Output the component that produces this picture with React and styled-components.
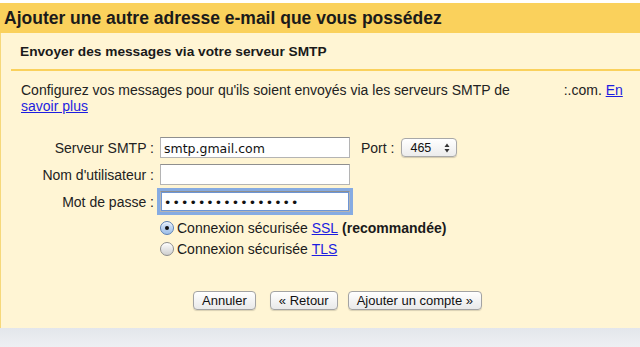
import React from 'react'
import styled, { createGlobalStyle } from 'styled-components'

const GlobalStyle = createGlobalStyle`
  html, body {
    margin: 0;
    padding: 0;
    background: #ffffff;
  }
  body {
    font-family: "Liberation Sans", Arial, sans-serif;
    color: #222;
  }
`;

const Page = styled.div`
  width: 640px;
  height: 347px;
  padding-top: 3px;
  box-sizing: border-box;
  display: flex;
  flex-direction: column;
  overflow: hidden;
`;

const Header = styled.h1`
  margin: 0;
  height: 30px;
  line-height: 31px;
  padding-left: 4px;
  background: #fad15c;
  font-size: 17.5px;
  font-weight: bold;
  color: #1a1a1a;
  white-space: nowrap;
`;

const Panel = styled.div`
  height: 295px;
  box-sizing: border-box;
  background: #fff5d4;
  border-left: 1px solid #f6d87a;
  display: flex;
  flex-direction: column;
`;

const SubHead = styled.h2`
  margin: 0 0 0 10px;
  height: 36px;
  padding-left: 9px;
  display: flex;
  align-items: center;
  border-bottom: 2px solid #fad15c;
  font-size: 13.7px;
  font-weight: bold;
  color: #1a1a1a;
`;

const Intro = styled.p`
  margin: 11px 10px 0 20px;
  font-size: 14px;
  line-height: 16px;
`;

const Hidden = styled.span`
  display: inline-block;
  width: 50px;
`;

const Link = styled.a`
  color: #1d1de0;
  text-decoration: underline;
  cursor: pointer;
`;

const Form = styled.div`
  margin-top: 23px;
  display: grid;
  grid-template-columns: 153px auto;
  column-gap: 6px;
  row-gap: 6px;
  align-items: center;
`;

const Label = styled.label`
  text-align: right;
  font-size: 14px;
  color: #222;
  white-space: nowrap;
`;

const FieldRow = styled.div`
  display: flex;
  align-items: center;
`;

const TextInput = styled.input`
  width: 190px;
  height: 21px;
  box-sizing: border-box;
  margin: 0;
  padding: 1px 3px 0;
  border: 1px solid #b4b4b4;
  border-top-color: #8f8f8f;
  background: #fff;
  font-family: "DejaVu Sans", "Liberation Sans", sans-serif;
  font-size: 12.5px;
  color: #111;
  outline: none;
  box-shadow: ${p => (p.$focused ? '0 0 0 3px #86abe2, inset 0 0 0 1px #6c95d6' : 'none')};
  letter-spacing: ${p => (p.type === 'password' ? '1.1px' : 'normal')};
`;

const PortLabel = styled.span`
  margin-left: 11px;
  font-size: 14px;
`;

const PortSelect = styled.div`
  margin-left: 7px;
  width: 56px;
  height: 19px;
  box-sizing: border-box;
  border: 1px solid #a8a8a8;
  border-radius: 4px;
  background: linear-gradient(#ffffff, #ececec);
  box-shadow: 0 1px 1px rgba(0, 0, 0, 0.18);
  display: flex;
  align-items: center;
  justify-content: space-between;
  padding: 0 6px 0 8px;
  font-size: 12.5px;
  color: #111;
`;

const Options = styled.div`
  grid-column: 2;
  display: flex;
  flex-direction: column;
  margin-top: -1px;
`;

const RadioRow = styled.label`
  height: 21px;
  display: flex;
  align-items: center;
  font-size: 14px;
  color: #1a1a1a;
  white-space: nowrap;
`;

const Radio = styled.input`
  appearance: none;
  -webkit-appearance: none;
  margin: 0 3px 0 0;
  width: 14px;
  height: 14px;
  border-radius: 50%;
  border: 1px solid #8d8d8d;
  box-sizing: border-box;
  background: linear-gradient(#fdfdfd, #cfcfcf);
  box-shadow: inset 0 1px 1px rgba(255, 255, 255, 0.8);
  display: grid;
  place-items: center;

  &:checked {
    border-color: #5a7fb4;
    background: linear-gradient(#dbe8f8, #9ebfe9);
  }
  &:checked::after {
    content: '';
    width: 4px;
    height: 4px;
    border-radius: 50%;
    background: #111;
  }
`;

const Strong = styled.b`
  margin-left: 4px;
`;

const Buttons = styled.div`
  margin-top: 32px;
  padding-left: 192px;
  display: flex;
`;

const Button = styled.button`
  height: 19px;
  margin: 0 ${p => p.$gap || 0}px 0 0;
  padding: 0 8px;
  border: 1px solid #a3a3a3;
  border-radius: 4px;
  background: linear-gradient(#ffffff, #e9e9e9);
  box-shadow: 0 1px 1px rgba(0, 0, 0, 0.15);
  font-family: "Liberation Sans", Arial, sans-serif;
  font-size: 13px;
  color: #111;
  line-height: 17px;
`;

const Footer = styled.div`
  flex: 1;
  background: linear-gradient(#e3e6eb, #eef0f3);
`;

const Arrows = () => (
  <svg width="6" height="10" viewBox="0 0 6 10">
    <path d="M3 0.5 L5.5 4 H0.5 Z" fill="#333" />
    <path d="M3 9.5 L5.5 6 H0.5 Z" fill="#333" />
  </svg>
);

const App = () => {
  return (
    <>
      <GlobalStyle />
      <Page>
        <Header>Ajouter une autre adresse e-mail que vous possédez</Header>
        <Panel>
          <SubHead>Envoyer des messages via votre serveur SMTP</SubHead>
          <Intro>
            Configurez vos messages pour qu'ils soient envoyés via les serveurs SMTP de <Hidden />
            :.com. <Link>En</Link> <Link>savoir plus</Link>
          </Intro>
          <Form>
            <Label>Serveur SMTP :</Label>
            <FieldRow>
              <TextInput type="text" defaultValue="smtp.gmail.com" />
              <PortLabel>Port :</PortLabel>
              <PortSelect>
                <span>465</span>
                <Arrows />
              </PortSelect>
            </FieldRow>
            <Label>Nom d'utilisateur :</Label>
            <FieldRow>
              <TextInput type="text" defaultValue="" />
            </FieldRow>
            <Label>Mot de passe :</Label>
            <FieldRow>
              <TextInput type="password" defaultValue="xxxxxxxxxxxxxxxx" $focused />
            </FieldRow>
            <Options>
              <RadioRow>
                <Radio type="radio" name="sec" defaultChecked />
                Connexion sécurisée&nbsp;<Link>SSL</Link>
                <Strong>(recommandée)</Strong>
              </RadioRow>
              <RadioRow>
                <Radio type="radio" name="sec" />
                Connexion sécurisée&nbsp;<Link>TLS</Link>
              </RadioRow>
            </Options>
          </Form>
          <Buttons>
            <Button $gap={14}>Annuler</Button>
            <Button $gap={10}>« Retour</Button>
            <Button>Ajouter un compte »</Button>
          </Buttons>
        </Panel>
        <Footer />
      </Page>
    </>
  )
}

export default App
